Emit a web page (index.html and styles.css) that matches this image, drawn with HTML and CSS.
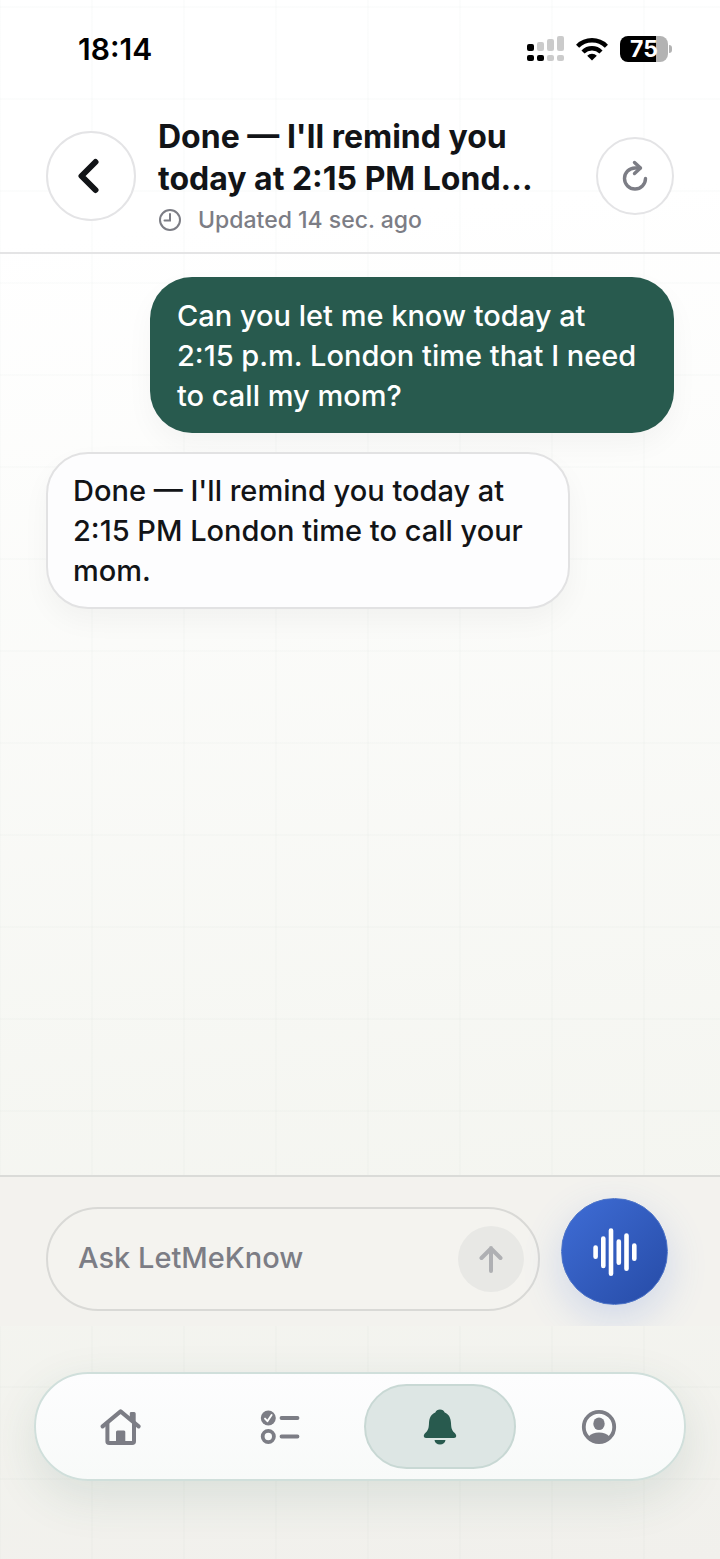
FILE: index.html
```
<!DOCTYPE html>
<html lang="en">

<head>
    <meta charset="UTF-8">
    <meta name="viewport" content="width=device-width, initial-scale=1.0">
    <title>LetMeKnow</title>

    <link rel="stylesheet" href="styles.css">
</head>

<body>
    <div class="status-bar">
        <span class="time">18:14</span>
        <div class="status-icons">
            <svg width="37" height="26" viewBox="0 0 37 26" fill="#cbcbcb" aria-hidden="true">
                <rect x="0" y="8" width="7" height="7" rx="2" fill="#000"/>
                <rect x="10" y="6" width="7" height="9" rx="2"/>
                <rect x="20" y="3" width="7" height="12" rx="2"/>
                <rect x="30" y="0" width="7" height="15" rx="2"/>
                <rect x="0" y="19" width="7" height="6" rx="2" fill="#000"/>
                <rect x="10" y="19" width="7" height="6" rx="2" fill="#000"/>
                <rect x="20" y="19" width="7" height="6" rx="2"/>
                <rect x="30" y="19" width="7" height="6" rx="2"/>
            </svg>
            <svg width="32" height="24" viewBox="0 0 32 24" fill="none" stroke="#000" stroke-width="4.4" aria-hidden="true">
                <path d="M1.6 9.2a20.5 20.5 0 0 1 28.8 0"/>
                <path d="M7 15a12.8 12.8 0 0 1 18 0"/>
                <path d="M16 23.5l-4.8-4.8a6.8 6.8 0 0 1 9.6 0z" fill="#000" stroke="none"/>
            </svg>
            <div class="battery"><span>75</span></div>
        </div>
    </div>

    <header class="header">
        <button class="round-btn back-btn" aria-label="Back">
            <svg width="28" height="36" viewBox="0 0 28 36" fill="none" stroke="#121417" stroke-width="6" stroke-linecap="round" stroke-linejoin="round">
                <path d="M18.500 4L4.500 18L18.500 32"/>
            </svg>
        </button>
        <div class="header-text">
            <h1>Done — I'll remind you today at 2:15 PM Lond...</h1>
            <p class="updated">
                <svg width="24" height="24" viewBox="0 0 24 24" fill="none" stroke="currentColor" stroke-width="2" stroke-linecap="round">
                    <circle cx="12" cy="12" r="10"/>
                    <path d="M12 6v6.5H6.5"/>
                </svg>
                Updated 14 sec. ago
            </p>
        </div>
        <button class="round-btn refresh-btn" aria-label="Refresh">
            <svg width="28" height="32" viewBox="0 0 28 32" fill="none" stroke="#7c7d85" stroke-width="3.4" stroke-linecap="round" stroke-linejoin="round">
                <path d="M24.5 18.500A10.500 10.500 0 1 1 14 8H19"/>
                <path d="M13.500 2.500L19.500 8L13.500 13.500"/>
            </svg>
        </button>
    </header>

    <main class="chat">
        <p class="bubble sent">Can you let me know today at 2:15 p.m. London time that I need to call my mom?</p>
        <p class="bubble received">Done — I'll remind you today at 2:15 PM London time to call your mom.</p>
    </main>

    <form class="composer">
        <div class="field">
            <input type="text" placeholder="Ask LetMeKnow" aria-label="Ask LetMeKnow">
            <button type="button" class="send-btn" aria-label="Send">
                <svg width="26" height="30" viewBox="0 0 26 30" fill="none" stroke="#afb0b3" stroke-width="4" stroke-linecap="round" stroke-linejoin="round">
                    <path d="M13 27V4M3.5 14L13 4.5L22.5 14"/>
                </svg>
            </button>
        </div>
        <button type="button" class="voice-btn" aria-label="Voice">
            <svg width="46" height="48" viewBox="0 0 46 48" stroke="#fff" stroke-width="4.6" stroke-linecap="round">
                <path d="M3.6 19.5v9.2M11.3 10.5v27.4M19 2.5v43.2M26.8 13.5v21.2M34.5 7.5v33.2M42.3 17.5v13.2"/>
            </svg>
        </button>
    </form>

    <nav class="tab-bar">
        <a href="#" aria-label="Home">
            <svg width="42" height="38" viewBox="0 0 42 38" fill="none" stroke="currentColor" stroke-width="4" stroke-linecap="round" stroke-linejoin="round">
                <path d="M2.6 18.4L20.6 3.4L38.6 18.4"/>
                <path d="M7.4 15.5V33.2Q7.4 35 9.2 35H32.2Q34 35 34 33.2V15.5"/>
                <path d="M30.500 11V5.6Q30.500 4.6 31.500 4.6H34Q35 4.6 35 5.6V15z" fill="currentColor" stroke-width="1.400"/>
                <path d="M16 36V24Q16 22.5 17.5 22.5H24Q25.300 22.500 25.300 24V36z" fill="currentColor" stroke="none"/>
            </svg>
        </a>
        <a href="#" aria-label="Tasks">
            <svg width="40" height="36" viewBox="0 0 40 36" fill="none" stroke="currentColor" stroke-width="3.8" stroke-linecap="round" stroke-linejoin="round">
                <circle cx="8.300" cy="9" r="7.500" fill="currentColor" stroke="none"/>
                <path d="M5 9.600L7.400 12.200L11.600 6" stroke="#fff" stroke-width="1.900"/>
                <circle cx="8.300" cy="27.500" r="5.600"/>
                <path d="M21.500 9H37.500M21.500 27.500H37.500"/>
            </svg>
        </a>
        <a href="#" class="active" aria-label="Reminders">
            <svg width="34" height="36" viewBox="0 0 34 36" fill="currentColor">
                <path d="M17 .5c-2.300 0-4 1.200-4.700 3C8 5.300 6.200 9 6 14c-.2 5-.8 7.300-3.200 9.600C1.200 25.200.8 26 .8 27c0 1.200.9 2 2.200 2h28c1.300 0 2.200-.8 2.200-2 0-1-.4-1.800-2-3.400C28.800 21.300 28.200 19 28 14c-.2-5-2-8.700-6.300-10.500C21 1.700 19.300.5 17 .5z"/>
                <path d="M11.500 31h11c-.3 2.800-2.500 4.600-5.500 4.600s-5.200-1.800-5.500-4.600z"/>
            </svg>
        </a>
        <a href="#" aria-label="Account">
            <svg width="36" height="36" viewBox="0 0 36 36" fill="currentColor">
                <circle cx="18" cy="18" r="15.200" fill="none" stroke="currentColor" stroke-width="3.800"/>
                <ellipse cx="18" cy="14.800" rx="5.700" ry="6.300"/>
                <path d="M7.500 27.500C10 24.800 13.700 23.500 18 23.500S26 24.800 28.500 27.500L26 32Q18 36 10 32z"/>
            </svg>
        </a>
    </nav>
</body>

</html>
```
FILE: styles.css
```
* {
    box-sizing: border-box;
}

body {
    margin: 0;
    min-height: 100vh;
    display: flex;
    flex-direction: column;
    font-family: Inter, 'Liberation Sans', sans-serif;
    color: #121417;
    /* faint grid over a soft vertical fade */
    background:
        linear-gradient(to right, rgba(40, 90, 78, 0.014) 2px, transparent 2px) -1px 0 / 92px 92px,
        linear-gradient(to bottom, rgba(40, 90, 78, 0.014) 2px, transparent 2px) 0 6px / 92px 92px,
        linear-gradient(175deg, #ffffff 15%, #f4f5f0 78%, #f1f0ec 100%);
}

h1,
p {
    margin: 0;
}

button {
    display: flex;
    justify-content: center;
    align-items: center;
    flex-shrink: 0;
    padding: 0;
    border: none;
    border-radius: 50%;
    cursor: pointer;
}

svg {
    display: block;
    flex-shrink: 0;
}

/* Status bar */
.status-bar {
    display: flex;
    justify-content: space-between;
    align-items: center;
    height: 98px;
    padding: 0 52px 0 78px;
}

.time {
    font-size: 30px;
    font-weight: 600;
    color: #000;
}

.status-icons {
    display: flex;
    align-items: center;
    gap: 12px;
}

.battery {
    position: relative;
    width: 48px;
    height: 26px;
    border-radius: 8px;
    background: linear-gradient(to right, #000 75%, #b3b3b3 75%);
    color: #fff;
    font-size: 23px;
    font-weight: 700;
    line-height: 26px;
    text-align: center;
}

.battery::after {
    content: "";
    position: absolute;
    top: 9px;
    right: -4px;
    width: 3px;
    height: 8px;
    border-radius: 0 3px 3px 0;
    background: #b3b3b3;
}

/* Header */
.header {
    display: flex;
    align-items: center;
    gap: 22px;
    padding: 18px 46px 16px;
    border-bottom: 2px solid #e4e4e5;
}

.round-btn {
    border: 2px solid #e4e4e6;
    background: #fff;
}

.back-btn {
    width: 90px;
    height: 90px;
}

.refresh-btn {
    width: 78px;
    height: 78px;
}

.header-text {
    flex: 1;
}

h1 {
    font-size: 32px;
    font-weight: 700;
    line-height: 42px;
}

.updated {
    display: flex;
    align-items: center;
    gap: 16px;
    margin-top: 4px;
    font-size: 23px;
    font-weight: 500;
    line-height: 32px;
    color: #7c7d85;
}

/* Messages */
.chat {
    flex: 1;
    display: flex;
    flex-direction: column;
    gap: 19px;
    padding: 23px 46px;
}

.bubble {
    width: 84%;
    max-width: 524px;
    padding: 19px 27px 17px;
    border-radius: 42px;
    font-size: 29px;
    font-weight: 500;
    line-height: 40px;
}

.sent {
    align-self: flex-end;
    background: #285a4e;
    color: #fff;
    box-shadow: 0 12px 28px rgba(0, 0, 0, 0.04);
}

.received {
    padding: 17px 25px 16px;
    border: 2px solid #e2e2e3;
    background: #fdfdfe;
    box-shadow: 0 12px 28px rgba(0, 0, 0, 0.04);
}

/* Composer */
.composer {
    display: flex;
    align-items: flex-start;
    gap: 21px;
    padding: 21px 52px 15px 46px;
    border-top: 2px solid #dadbd8;
    background: #f3f2ee;
    overflow: hidden;
}

.field {
    flex: 1;
    display: flex;
    align-items: center;
    min-width: 0;
    height: 104px;
    margin-top: 9px;
    padding: 0 14px 0 30px;
    border: 2px solid #d9d9d6;
    border-radius: 52px;
    background: #f4f3ef;
}

.field input {
    flex: 1;
    min-width: 0;
    padding: 0 0 4px;
    border: none;
    outline: none;
    background: transparent;
    font-family: inherit;
    font-size: 29px;
    font-weight: 500;
    color: #121417;
}

.field input::placeholder {
    color: #7c7d85;
    opacity: 1;
}

.send-btn {
    width: 66px;
    height: 66px;
    background: #e8e8e5;
}

.voice-btn {
    width: 107px;
    height: 107px;
    border: 1px solid #4d74c8;
    background: linear-gradient(135deg, #3f6dd6, #264ba6);
    box-shadow: 0 14px 40px rgba(63, 109, 214, 0.2);
}

/* Tab bar */
.tab-bar {
    display: flex;
    gap: 7px;
    margin: 46px 34px 78px;
    padding: 10px 9px;
    border: 2px solid #d0dfdb;
    border-radius: 54px;
    background: linear-gradient(#fdfdfe, #f8faf9);
    box-shadow: 0 16px 48px rgba(40, 90, 78, 0.12);
}

.tab-bar a {
    flex: 1;
    display: flex;
    justify-content: center;
    align-items: center;
    height: 85px;
    border: 2px solid transparent;
    border-radius: 43px;
    color: #7c7d85;
}

.tab-bar .active {
    border-color: #c8d8d4;
    background: #dde6e4;
    color: #285a4e;
}
```
